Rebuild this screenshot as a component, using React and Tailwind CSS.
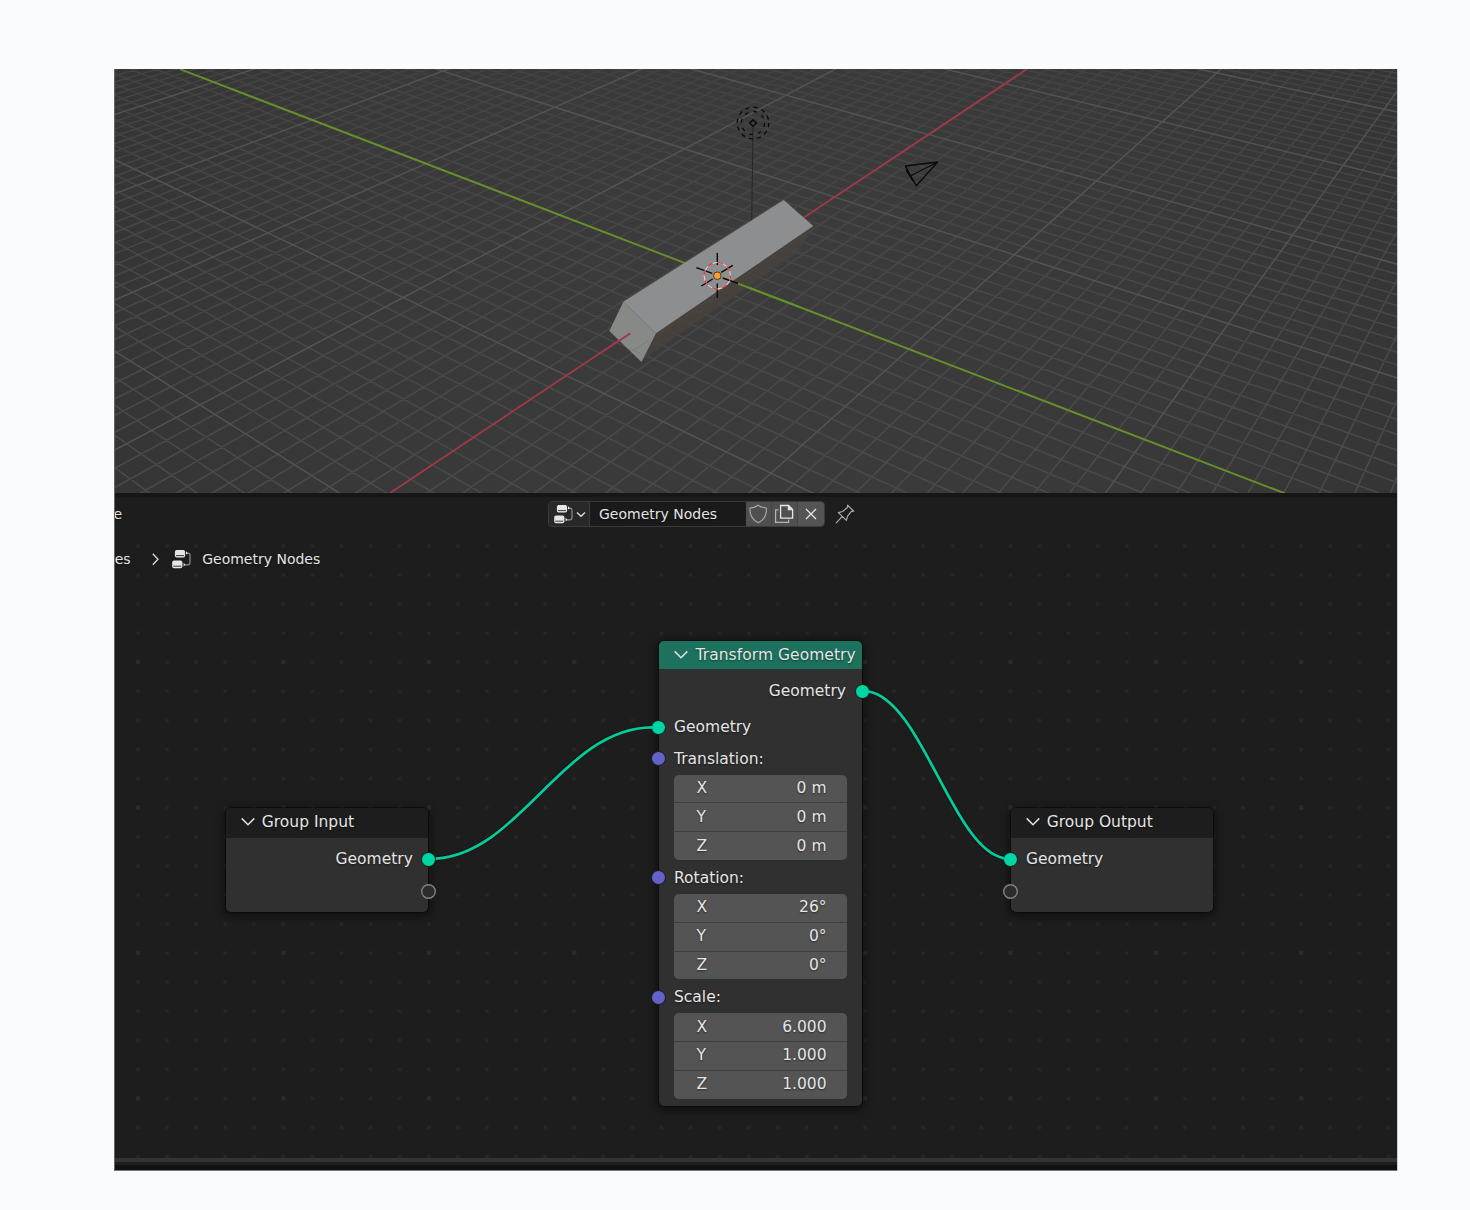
import React from "react";

// Floor crossings: [u, v, x, y] in grid units and viewport pixels.
const CROSSINGS = [
  [0, 0, 717.1, 275.4], [0, 0, 717.1, 275.4], [0, 0, 717.1, 275.4], [0, 0, 717.1, 275.4],
  [-10, 0, 568.5, 374.3], [10, 0, 835.3, 196.8], [0, 10, 909, 349.2],
  [-10, -30, 154.3, 179], [-10, -20, 268, 233], [-10, -10, 402.7, 297.7],
  [-20, -10, 201.3, 404], [10, 20, 1229.3, 324], [20, 20, 1292.7, 235.3], [30, 20, 1343.3, 166],
  [40, 20, 1384, 108], [10, 10, 1014.3, 255.3], [20, 10, 1095, 181.3], [30, 10, 1161.7, 121.3],
  [0, 20, 1145.7, 440], [-10, 10, 770, 473.3], [0, -20, 424, 162.7], [10, -10, 691.7, 150], [20, -10, 785, 95.7],
];

// Least-squares perspective transform from floor units to pixels.
function fit() {
  const A = Array.from({ length: 8 }, () => Array(9).fill(0));
  for (const [u, v, x, y] of CROSSINGS) {
    for (const r of [[u, v, 1, 0, 0, 0, -u * x, -v * x, x], [0, 0, 0, u, v, 1, -u * y, -v * y, y]])
      for (let i = 0; i < 8; i++) for (let j = 0; j < 9; j++) A[i][j] += r[i] * r[j];
  }
  for (let i = 0; i < 8; i++) {
    let p = i;
    for (let k = i; k < 8; k++) if (Math.abs(A[k][i]) > Math.abs(A[p][i])) p = k;
    [A[i], A[p]] = [A[p], A[i]];
    for (let k = 0; k < 8; k++) {
      if (k === i) continue;
      const f = A[k][i] / A[i][i];
      for (let j = i; j < 9; j++) A[k][j] -= f * A[i][j];
    }
  }
  return A.map((r, i) => r[8] / r[i]);
}
const H = fit();

function project(u, v) {
  const w = H[6] * u + H[7] * v + 1;
  return [(H[0] * u + H[1] * v + H[2]) / w, (H[3] * u + H[4] * v + H[5]) / w];
}

const MIN_W = 0.2;
function gridPaths(major) {
  let d = "";
  for (let n = -120; n <= 120; n++) {
    if (n === 0 || (n % 10 === 0) !== major) continue;
    // u = n; v grows toward the viewer
    const vMax = Math.min(120, (MIN_W - 1 - H[6] * n) / H[7]);
    if (vMax > -120) {
      const a = project(n, -120), b = project(n, vMax);
      d += `M${a[0].toFixed(1)} ${a[1].toFixed(1)}L${b[0].toFixed(1)} ${b[1].toFixed(1)}`;
    }
    // v = n; u shrinks toward the viewer
    const uMin = Math.max(-120, (MIN_W - 1 - H[7] * n) / H[6]);
    if (uMin < 120) {
      const a = project(uMin, n), b = project(120, n);
      d += `M${a[0].toFixed(1)} ${a[1].toFixed(1)}L${b[0].toFixed(1)} ${b[1].toFixed(1)}`;
    }
  }
  return d;
}
const MINOR = gridPaths(false);
const MAJOR = gridPaths(true);

function Viewport() {
  return (
    <svg className="block h-[424px] w-[1283px] shrink-0" viewBox="114 69 1283 424">
      <defs>
        <radialGradient id="floor" gradientUnits="userSpaceOnUse" cx="755" cy="270" r="680">
          <stop offset="0" stopColor="#3c3c3c" />
          <stop offset="0.6" stopColor="#393939" />
          <stop offset="1" stopColor="#353535" />
        </radialGradient>
        <linearGradient id="minor" gradientUnits="userSpaceOnUse" x1="0" y1="69" x2="0" y2="493">
          <stop offset="0" stopColor="#424242" />
          <stop offset="0.4" stopColor="#474747" />
          <stop offset="1" stopColor="#4a4a4a" />
        </linearGradient>
      </defs>
      <rect x="114" y="69" width="1283" height="424" fill="url(#floor)" />
      <path d={MINOR} stroke="url(#minor)" strokeWidth="1.5" fill="none" />
      <path d={MAJOR} stroke="#535353" strokeWidth="1.5" fill="none" />
      <path d="M180 69.2L1285 493.4" stroke="#64902a" strokeWidth="1.9" />
      <path d="M1027 69L390 493" stroke="#9b3a48" strokeWidth="1.9" />
      <path d="M753 127L751.7 221" stroke="#262626" strokeWidth="1" />

      <path d="M656 333.3L813.3 226L810 234L797 253L646.7 357L641.5 362Z" fill="#48423d" fillOpacity="0.82" />
      <path d="M623.3 301.7L783.7 200L813.3 226L656 333.3Z" fill="#8d8e8f" />
      <path d="M623.3 301.7L656 333.3L641.5 362L609.3 331Z" fill="#878987" />
      <path d="M634 350L648 341M629 348L641 354" stroke="#7b7d7b" strokeWidth="1" />
      <path d="M738 283.6L800 307.2" stroke="#64902a" strokeWidth="1.9" />
      <path d="M630.3 333.4L600 353.3" stroke="#9b3a48" strokeWidth="1.9" />

      <g fill="none" stroke="#0a0a0a" strokeWidth="1.3">
        <circle cx="753" cy="123" r="15.8" strokeDasharray="4.2 4.07" />
        <circle cx="753" cy="123" r="11.5" strokeDasharray="3.8 5.23" />
        <path d="M753 119.8L756.2 123L753 126.2L749.8 123Z" strokeWidth="1.6" />
        <path d="M905.3 166L937.7 162L916.3 185.7ZM910.3 176L937.7 162M905.3 166L910.3 176L916.3 185.7M906 170L913 181" strokeLinejoin="round" />
        <path d="M717.3 253V265M717.3 283.5V298M696.3 267.7L712.3 273.4M722.7 278L738 283.5M732.7 265.3L721.3 272.4M701.3 286L712.7 279" strokeWidth="1.4" />
        <circle cx="717.3" cy="275.7" r="13.2" stroke="#dedede" strokeWidth="1" />
        <circle cx="717.3" cy="275.7" r="13.2" stroke="#f02a2a" strokeWidth="1.1" strokeDasharray="5.18 5.18" />
      </g>
      <circle cx="717.3" cy="275.7" r="3.8" fill="#ff9d2e" stroke="#4a3a28" strokeWidth="1" />
    </svg>
  );
}

function TreeIcon() {
  return (
    <svg className="h-5 w-5 shrink-0" viewBox="0 0 20 20" fill="none">
      <rect x="3.9" y="0.9" width="10.2" height="7.6" rx="1.8" fill="#e6e6e6" />
      <path d="M5 6.6H13" stroke="#3a3a3a" strokeWidth="1" />
      <rect x="1.2" y="11.6" width="10.2" height="7.6" rx="1.8" fill="#e6e6e6" />
      <path d="M2.3 17.2H10.3" stroke="#3a3a3a" strokeWidth="1" />
      <path d="M16.2 4.2H16.9Q19 4.2 19 6.2V13.5Q19 15.8 16.8 15.8H13.5" stroke="#8c8c8c" strokeWidth="1.2" />
      <path d="M15 2.3L17 4.2L15 5.4ZM12.6 13.8V17.6L14.4 15.8Z" fill="#e6e6e6" />
    </svg>
  );
}

function Header() {
  return (
    <div className="flex h-[34px] items-start border-t-[4px] border-[#161616] pt-[4px] text-[14px] leading-[25px]">
      <span className="w-[434px] pt-px -indent-[0.5px]">e</span>
      <div className="flex h-[26px] overflow-hidden rounded-[4px] border border-[#3a3a3a] bg-[#1a1a1a]">
        <div className="flex w-[41px] items-center border-r border-[#3a3a3a] bg-[#282828] pl-[4px]">
          <TreeIcon />
          <svg className="ml-[3px] h-[10px] w-[10px]" viewBox="0 0 10 10" fill="none" stroke="#dcdcdc" strokeWidth="1.4">
            <path d="M1 3.4L5 7.2L9 3.4" />
          </svg>
        </div>
        <span className="w-[155.5px] pl-[9px] leading-[24px]">Geometry Nodes</span>
        <div className="flex w-[26px] items-center justify-center border-r border-[#434343] bg-[#4f4f4f]">
          <svg className="h-5 w-5" viewBox="0 0 20 20" fill="none" stroke="#a6a6a6" strokeWidth="1.2">
            <path d="M10.2 1.2Q13.6 3.7 18.4 4Q19 14.6 10.2 18.8Q1.4 14.6 2 4Q6.8 3.7 10.2 1.2Z" />
          </svg>
        </div>
        <div className="flex w-[26.5px] items-center justify-center border-r border-[#434343] bg-[#4f4f4f]">
          <svg className="h-5 w-5" viewBox="0 0 20 20" fill="none">
            <path d="M4.5 5.8H1.6V18.3H14.6V15.6" stroke="#b4b4b4" strokeWidth="1.2" />
            <path d="M6.6 1.5H14.5L18.6 5.6V14.2H6.6Z" stroke="#e6e6e6" strokeWidth="1.3" />
            <path d="M13.8 1L19.1 6.3H13.8Z" fill="#e6e6e6" />
          </svg>
        </div>
        <div className="flex w-[25.5px] items-center justify-center bg-[#545454]">
          <svg className="h-3 w-3" viewBox="0 0 12 12" stroke="#e6e6e6" strokeWidth="1.3">
            <path d="M1 1L11 11M11 1L1 11" />
          </svg>
        </div>
      </div>
      <svg className="ml-[10px] mt-[3px] h-5 w-5" viewBox="0 0 20 20" fill="none" stroke="#a8a8a8" strokeWidth="1.2" strokeLinejoin="round">
        <path d="M1 19.2L7.3 12.4M3.4 8.6L11.4 16.4L12.6 12.2L16.4 7.4L18.8 7.2L12.6 1.2L12.4 3.5L7.6 7.5Z" />
      </svg>
    </div>
  );
}

function Breadcrumb() {
  return (
    <div className="flex h-[64px] items-center text-[14px]">
      <span className="w-[36px] pl-[0.7px]">es</span>
      <svg className="h-[14px] w-[10px]" viewBox="0 0 10 14" fill="none" stroke="#dcdcdc" strokeWidth="1.3">
        <path d="M2.8 1.8L8 7.3L2.8 12.8" />
      </svg>
      <div className="ml-[11px]"><TreeIcon /></div>
      <span className="ml-[11.2px]">Geometry Nodes</span>
    </div>
  );
}

function Socket({ side, color }) {
  return (
    <span
      className={
        "absolute top-1/2 -mt-[7.5px] h-[15px] w-[15px] rounded-full " +
        (side === "left" ? "-left-[8px] " : "-right-[8px] ") +
        (color === "green" ? "border border-[#161616] bg-[#00d6a3]" : color === "purple" ? "border border-[#161616] bg-[#6363c7]" : "bg-[#2c2c2c] shadow-[inset_0_0_0_1.4px_#808080]")
      }
    />
  );
}

function NodeTitle({ children, green }) {
  return (
    <div className={"flex items-center rounded-t-[5px] pl-[15px] " + (green ? "h-[28px] bg-[#1d725e]" : "h-[29.5px] bg-[#1d1d1d] pb-[2px]")}>
      <svg className="h-[10px] w-[14px] shrink-0" viewBox="0 0 14 10" fill="none" stroke="#e0e0e0" strokeWidth="1.5">
        <path d="M0.7 1.4L7 7.8L13.3 1.4" />
      </svg>
      <span className={"whitespace-nowrap " + (green ? "ml-[7.5px] pt-px tracking-[0.05px]" : "ml-[6.8px] pt-[2px]")}>{children}</span>
    </div>
  );
}

function Vector({ label, values }) {
  return (
    <div>
      <div className="relative mt-[1.5px] flex h-[32.3px] items-center pl-[15px] pt-[2px]">
        <Socket side="left" color="purple" />
        {label}
      </div>
      <div className="ml-[14.5px] mr-[15px] flex h-[85.5px] flex-col gap-px overflow-hidden rounded-[5px] bg-[#3e3e3e]">
        {values.map((value, i) => (
          <div key={i} className="flex flex-1 items-center justify-between bg-[#545454] pl-[23px] pr-[20px] pt-[0.5px]">
            <span>{"XYZ"[i]}</span>
            <span>{value}</span>
          </div>
        ))}
      </div>
    </div>
  );
}

const NODE = "absolute rounded-[5px] bg-[#303030] shadow-[0_2px_9px_2px_rgba(0,0,0,0.5),0_0_0_1px_rgba(0,0,0,0.35)] ";

function Canvas() {
  return (
    <div className="relative h-[631px] w-[1283px]">
      <svg className="absolute left-0 top-0 h-full w-full" viewBox="114 527 1283 631">
        <defs>
          <pattern id="dots" patternUnits="userSpaceOnUse" x="123.5" y="531.5" width="29.08" height="29.08">
            <rect x="12.8" y="12.9" width="3.4" height="3.2" fill="#272727" />
          </pattern>
          <pattern id="dots5" patternUnits="userSpaceOnUse" x="65.3" y="589.2" width="145.4" height="145.4">
            <rect x="70.8" y="70.8" width="4" height="4" fill="#2b2b2b" />
          </pattern>
        </defs>
        <rect x="114" y="540" width="1283" height="619" fill="url(#dots)" />
        <rect x="114" y="540" width="1283" height="619" fill="url(#dots5)" />
      </svg>
      <div className="relative"><Breadcrumb /></div>
      <div className={NODE + "left-[112px] top-[281px] h-[103.5px] w-[202px]"}>
        <NodeTitle>Group Input</NodeTitle>
        <div className="relative mt-[5.5px] flex h-8 items-center justify-end pr-[15.2px] pt-[1.5px]">Geometry<Socket side="right" color="green" /></div>
        <div className="relative h-8"><Socket side="right" /></div>
      </div>
      <div className={NODE + "left-[897px] top-[281px] h-[103.5px] w-[202px]"}>
        <NodeTitle>Group Output</NodeTitle>
        <div className="relative mt-[5.5px] flex h-8 items-center pl-[15px] pt-[1.5px]">Geometry<Socket side="left" color="green" /></div>
        <div className="relative h-8"><Socket side="left" /></div>
      </div>
      <div className={NODE + "left-[545px] top-[114px] h-[465px] w-[202.5px]"}>
        <NodeTitle green>Transform Geometry</NodeTitle>
        <div className="relative mt-[6px] flex h-8 items-center justify-end pr-[15.5px] pt-[2px]">Geometry<Socket side="right" color="green" /></div>
        <div className="relative mt-[4.3px] flex h-8 items-center pl-[15px] pt-[1px]">Geometry<Socket side="left" color="green" /></div>
        <div className="-mt-[2.5px]">
          <Vector label="Translation:" values={["0 m", "0 m", "0 m"]} />
          <Vector label="Rotation:" values={["26°", "0°", "0°"]} />
          <Vector label="Scale:" values={["6.000", "1.000", "1.000"]} />
        </div>
      </div>
      <svg className="pointer-events-none absolute left-0 top-0 h-full w-full" viewBox="114 527 1283 631" fill="none">
        <g stroke="#141414" strokeWidth="4.4">
          <path d="M437 858.3C521 853 563 727.4 651 727.4" />
          <path d="M869 691.4C922 700 952 848 1003 858" />
        </g>
        <g stroke="#06cb9b" strokeWidth="2.8">
          <path d="M436 858.6C521 853 563 728 652 727.4" />
          <path d="M868 691.3C922 700 952 848 1004 858.3" />
        </g>
      </svg>
    </div>
  );
}

export default function App() {
  return (
    <div className="h-[1210px] w-[1470px] bg-[#f9fbfd] pl-[114px] pt-[69px] font-['DejaVu_Sans',sans-serif] text-[15.5px] leading-none text-[#e4e4e4]">
      <div className="relative flex h-[1102px] w-[1284px] flex-col overflow-hidden bg-[#1d1d1d] [text-shadow:0_1px_2px_rgba(0,0,0,0.5)]">
        <Viewport />
        <Header />
        <Canvas />
        <div className="h-[4px] bg-[#333333]" />
        <div className="h-[3px] bg-[#1e1e1e]" />
        <div className="h-[5px] bg-[#121212]" />
        <div className="h-px bg-[#777777]" />
        <div className="absolute inset-0 border-x border-l-[#636466] border-r-[#cfd0d1]" />
      </div>
    </div>
  );
}
